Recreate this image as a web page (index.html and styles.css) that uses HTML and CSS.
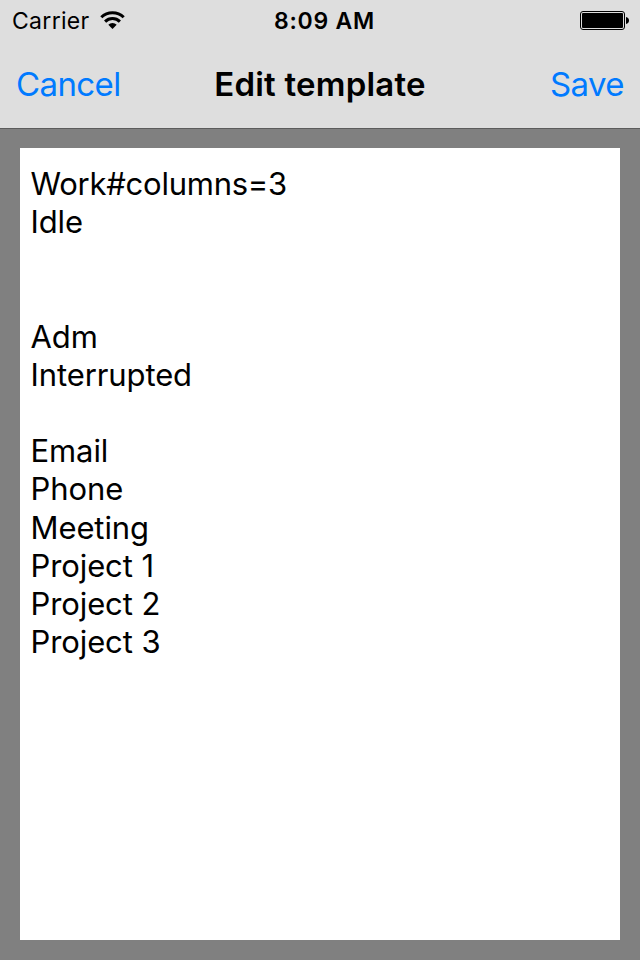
FILE: index.html
```html
<!DOCTYPE html>
<html lang="en">
<head>
<meta charset="utf-8">
<title>Edit template</title>
<link rel="stylesheet" href="styles.css">
</head>
<body>
<header class="top">
<div class="status">
<div class="carrier"><span>Carrier</span>
<svg class="wifi" width="25" height="18" viewBox="0 0 25 18"><g fill="none" stroke="#000" stroke-width="3"><path d="M1.3 6.3a15.9 15.9 0 0 1 22.4 0"/><path d="M5.1 10.6a10.5 10.5 0 0 1 14.8 0"/></g><path d="M12.5 18l-4.2-4.2a6 6 0 0 1 8.4 0z"/></svg></div>
<time class="clock">8:09 AM</time>
<svg class="battery" width="49" height="19" viewBox="0 0 49 19"><rect x=".5" y=".5" width="44" height="18" rx="2.5" fill="none" stroke="#000"/><rect x="2" y="2" width="41" height="15" rx="1"/><path d="M46 6q3 .6 3 3.5t-3 3.5z"/></svg>
</div>
<nav class="nav"><a class="cancel">Cancel</a><h1 class="title">Edit template</h1><a class="save">Save</a></nav>
</header>
<main class="content"><div class="editor"><span class="directive">Work#columns=3</span>
Idle


Adm
Interrupted

Email
Phone
Meeting
Project 1
Project 2
Project 3</div></main>
</body>
</html>
```
FILE: styles.css
```css
* { box-sizing: border-box; }
body { margin: 0; height: 960px; display: flex; flex-direction: column; background: #808080; color: #000; font-family: Inter, sans-serif; }
.top { height: 129px; background: #dedede; border-bottom: 1px solid #5c5c5c; }
.status { height: 40px; display: grid; grid-template-columns: 262px 1fr auto; align-items: center; padding: 1px 11px 0 12px; font-size: 23px; }
.carrier { display: flex; align-items: center; gap: 10px; letter-spacing: .3px; }
.wifi { margin-top: -1px; }
.clock { font-weight: 580; letter-spacing: .75px; }
.battery { justify-self: end; }
.nav { height: 88px; display: grid; grid-template-columns: 1fr auto 1fr; align-items: center; padding: 0 16px; font-size: 33px; }
.nav a { color: #007aff; letter-spacing: -.6px; }
.title { margin: 0; font-size: 33px; font-weight: 570; letter-spacing: .2px; }
.save { justify-self: end; }
.content { flex: 1; padding: 19px 20px 20px; display: flex; }
.editor { flex: 1; background: #fff; padding: 17px 10.5px; font-size: 31px; letter-spacing: -.1px; line-height: 38.17px; white-space: pre; }
.directive { letter-spacing: -.25px; }
```
